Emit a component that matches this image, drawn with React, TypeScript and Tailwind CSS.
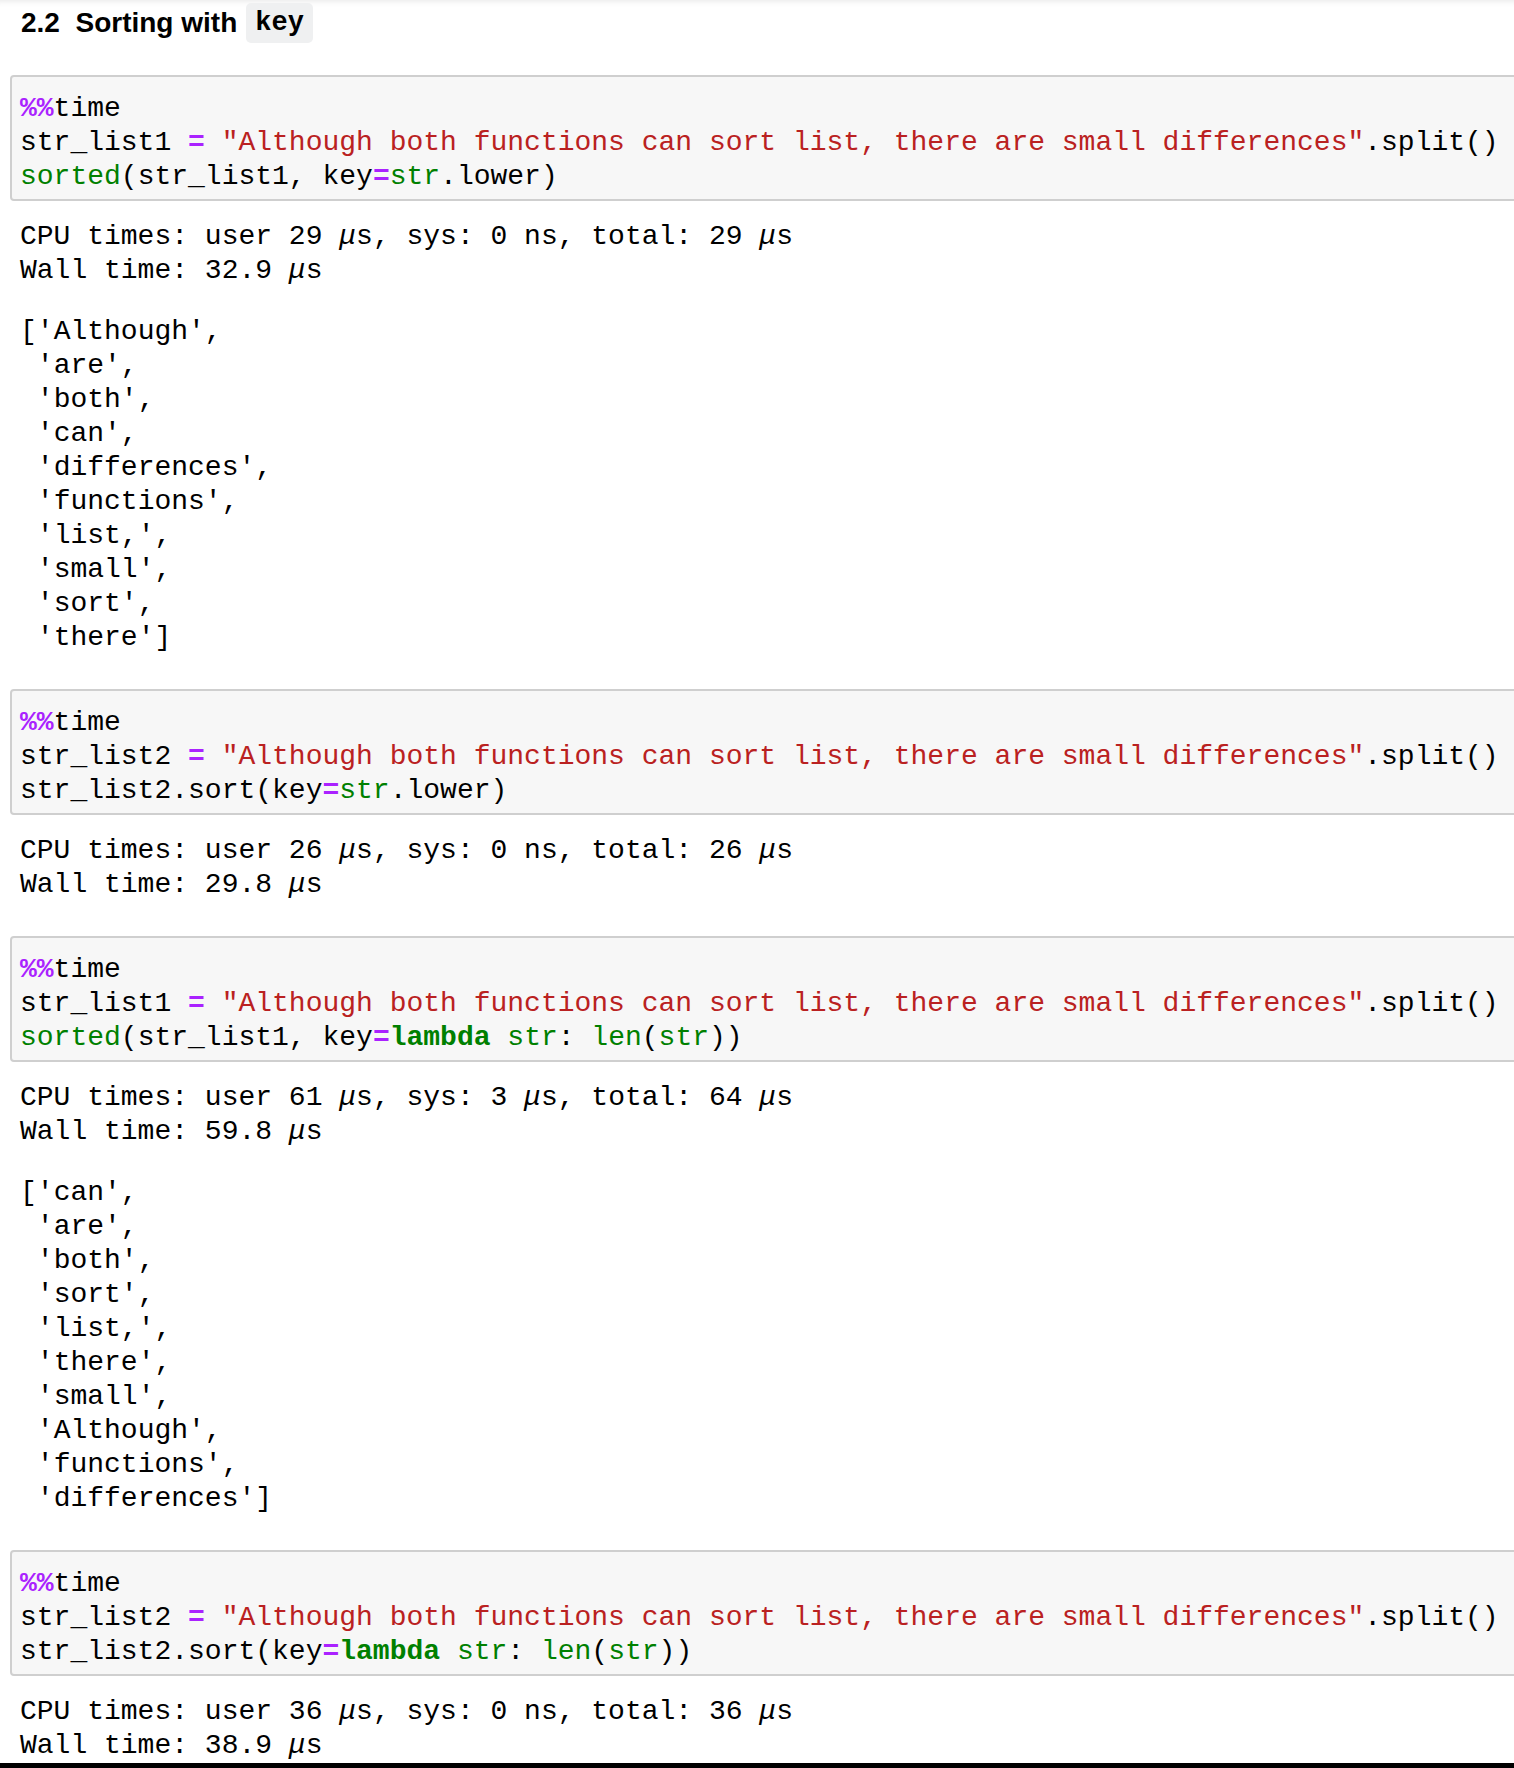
import React from 'react';

type Seg = [string, string?];

const MONO = "font-['Liberation_Mono','Courier_New',monospace]";
const OP = 'text-[#aa22ff] font-bold';
const STR = 'text-[#ba2121]';
const BI = 'text-[#008000]';
const KW = 'text-[#008000] font-bold';

const sentence = '"Although both functions can sort list, there are small differences"';

const cells: { code: Seg[][]; stream: string[]; result?: string[] }[] = [
  {
    code: [
      [['%%', OP], ['time']],
      [['str_list1 '], ['=', OP], [' '], [sentence, STR], ['.split()']],
      [['sorted', BI], ['(str_list1, key'], ['=', OP], ['str', BI], ['.lower)']],
    ],
    stream: ['CPU times: user 29 μs, sys: 0 ns, total: 29 μs', 'Wall time: 32.9 μs'],
    result: ['Although', 'are', 'both', 'can', 'differences', 'functions', 'list,', 'small', 'sort', 'there'],
  },
  {
    code: [
      [['%%', OP], ['time']],
      [['str_list2 '], ['=', OP], [' '], [sentence, STR], ['.split()']],
      [['str_list2.sort(key'], ['=', OP], ['str', BI], ['.lower)']],
    ],
    stream: ['CPU times: user 26 μs, sys: 0 ns, total: 26 μs', 'Wall time: 29.8 μs'],
  },
  {
    code: [
      [['%%', OP], ['time']],
      [['str_list1 '], ['=', OP], [' '], [sentence, STR], ['.split()']],
      [['sorted', BI], ['(str_list1, key'], ['=', OP], ['lambda', KW], [' '], ['str', BI], [': '], ['len', BI], ['('], ['str', BI], ['))']],
    ],
    stream: ['CPU times: user 61 μs, sys: 3 μs, total: 64 μs', 'Wall time: 59.8 μs'],
    result: ['can', 'are', 'both', 'sort', 'list,', 'there', 'small', 'Although', 'functions', 'differences'],
  },
  {
    code: [
      [['%%', OP], ['time']],
      [['str_list2 '], ['=', OP], [' '], [sentence, STR], ['.split()']],
      [['str_list2.sort(key'], ['=', OP], ['lambda', KW], [' '], ['str', BI], [': '], ['len', BI], ['('], ['str', BI], ['))']],
    ],
    stream: ['CPU times: user 36 μs, sys: 0 ns, total: 36 μs', 'Wall time: 38.9 μs'],
  },
];

// the micro sign renders slanted in the original output
function withMicro(line: string) {
  const parts = line.split('μ');
  return parts.map((p, i) => (
    <React.Fragment key={i}>
      {i > 0 && <span className="italic">μ</span>}
      {p}
    </React.Fragment>
  ));
}

function Cell({ code, stream, result, first }: { code: Seg[][]; stream: string[]; result?: string[]; first: boolean }) {
  return (
    <div className={first ? 'mt-[32px]' : 'mt-[34px]'}>
      <div className={`ml-[10px] w-[1530px] shrink-0 border-2 border-[#cfcfcf] rounded-[4px] bg-[#f7f7f7] pt-[15px] pb-[5px] pl-[8px] ${MONO} text-[28px] leading-[34px] text-black whitespace-pre`}>
        {code.map((line, i) => (
          <div key={i}>
            {line.map(([t, c], j) => (
              <span key={j} className={c}>{t}</span>
            ))}
          </div>
        ))}
      </div>

      <div className={`mt-[19px] pl-[20px] ${MONO} text-[28px] leading-[34px] text-black whitespace-pre`}>
        {stream.map((l, i) => (
          <div key={i}>{withMicro(l)}</div>
        ))}
      </div>

      {result && (
        <div className={`mt-[27px] pl-[20px] ${MONO} text-[28px] leading-[34px] text-black whitespace-pre`}>
          {result.map((w, i) => (
            <div key={i}>
              {i === 0 ? '[' : ' '}'{w}'{i === result.length - 1 ? ']' : ','}
            </div>
          ))}
        </div>
      )}
    </div>
  );
}

export default function App() {
  return (
    <div className="w-[1514px] h-[1768px] overflow-hidden bg-white flex flex-col shadow-[inset_0_7px_6px_-6px_rgba(0,0,0,0.10)]">
      {/* markdown heading */}
      <div className="pt-[3px] pl-[21px] flex items-center h-[43px]">
        <h3 className="font-['Liberation_Sans','Helvetica_Neue',Arial,sans-serif] font-bold text-[28px] leading-[40px] text-black">
          2.2&nbsp;&nbsp;Sorting with
        </h3>
        <span className={`ml-[9px] h-[40px] flex items-center px-[9px] rounded-[5px] bg-[#eff0f1] ${MONO} font-bold text-[27px] text-black`}>
          key
        </span>
      </div>

      {cells.map((c, i) => (
        <Cell key={i} code={c.code} stream={c.stream} result={c.result} first={i === 0} />
      ))}

      <div className="mt-auto h-[5px] bg-black shrink-0" />
    </div>
  );
}
